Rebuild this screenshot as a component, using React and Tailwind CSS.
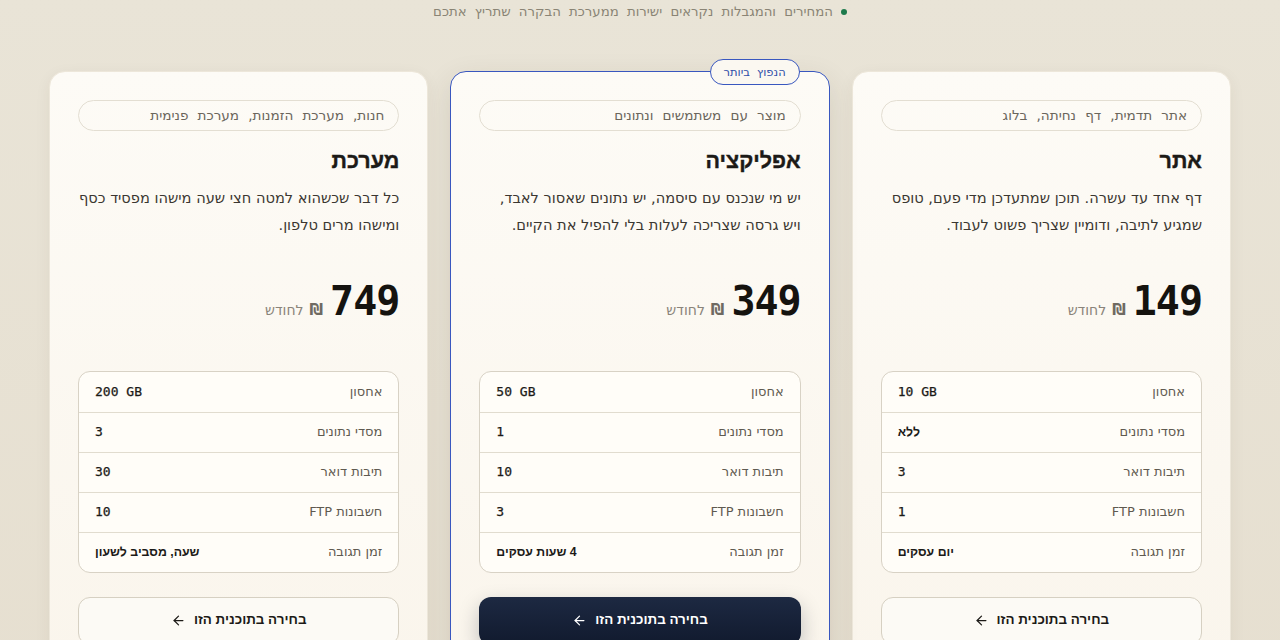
import { ArrowLeft } from 'lucide-react';

const mono = { fontFamily: '"DejaVu Sans Mono", "Liberation Mono", monospace' };
const heavy = { fontFamily: '"Liberation Sans", "DejaVu Sans", sans-serif' };

const plans = [
  {
    id: 'site',
    tags: 'אתר תדמית, דף נחיתה, בלוג',
    title: 'אתר',
    desc: 'דף אחד עד עשרה. תוכן שמתעדכן מדי פעם, טופס שמגיע לתיבה, ודומיין שצריך פשוט לעבוד.',
    price: '149',
    rows: [
      ['אחסון', '10 GB', true],
      ['מסדי נתונים', 'ללא', false],
      ['תיבות דואר', '3', true],
      ['חשבונות FTP', '1', true],
      ['זמן תגובה', 'יום עסקים', false],
    ],
  },
  {
    id: 'app',
    tags: 'מוצר עם משתמשים ונתונים',
    title: 'אפליקציה',
    desc: 'יש מי שנכנס עם סיסמה, יש נתונים שאסור לאבד, ויש גרסה שצריכה לעלות בלי להפיל את הקיים.',
    price: '349',
    featured: true,
    rows: [
      ['אחסון', '50 GB', true],
      ['מסדי נתונים', '1', true],
      ['תיבות דואר', '10', true],
      ['חשבונות FTP', '3', true],
      ['זמן תגובה', '4 שעות עסקים', false],
    ],
  },
  {
    id: 'system',
    tags: 'חנות, מערכת הזמנות, מערכת פנימית',
    title: 'מערכת',
    desc: 'כל דבר שכשהוא למטה חצי שעה מישהו מפסיד כסף ומישהו מרים טלפון.',
    price: '749',
    rows: [
      ['אחסון', '200 GB', true],
      ['מסדי נתונים', '3', true],
      ['תיבות דואר', '30', true],
      ['חשבונות FTP', '10', true],
      ['זמן תגובה', 'שעה, מסביב לשעון', false],
    ],
  },
];

function PlanCard({ plan }) {
  const { featured } = plan;
  return (
    <div
      className={
        'relative rounded-2xl bg-gradient-to-b from-[#fdfbf6] to-[#faf5ec] px-7 pt-7 pb-7 ' +
        (featured
          ? 'border border-[#3957bf] shadow-[0_10px_30px_rgba(60,50,30,0.12)]'
          : 'border border-[#ede7da] shadow-[0_4px_16px_rgba(60,50,30,0.06)]')
      }
    >
      {featured && (
        <span className="absolute -top-[13px] right-[29px] rounded-full border border-[#3957bf] bg-[#fbf8f1] px-[13px] py-[4px] text-[11.5px] leading-4 text-[#2f4ea8] [word-spacing:0.3em]">
          הנפוץ ביותר
        </span>
      )}

      <div className="flex h-[31px] items-center rounded-full border border-[#e3ded2] px-[14px] text-[13.6px] text-[#6b665c] [word-spacing:0.35em]">
        {plan.tags}
      </div>

      <h3
        className="mt-[14px] text-[21.5px] font-bold leading-8 text-[#1c1a17] [-webkit-text-stroke:0.4px_#1c1a17]"
        style={heavy}
      >
        {plan.title}
      </h3>
      <p className="mt-[7px] text-[14.6px] leading-[27px] text-[#3b3731]">{plan.desc}</p>

      <div className="mt-[44px] flex items-baseline">
        <span className="text-[40px] font-bold leading-[38px] tracking-tight text-[#15130f]" style={mono}>
          {plan.price}
        </span>
        <span className="mr-[7px] text-[15px] font-bold text-[#6f6a62]">₪</span>
        <span className="mr-[6px] text-[14px] text-[#8a847a]">לחודש</span>
      </div>

      <div className="mt-[49px] overflow-hidden rounded-xl border border-[#d8d2c5] bg-[#fffdf8]">
        {plan.rows.map(([label, value, isMono], i) => (
          <div
            key={label}
            className={
              'flex h-10 items-center justify-between px-4 ' +
              (i > 0 ? 'border-t border-[#e1dccf]' : '')
            }
          >
            <span className="text-[13px] text-[#5f5a50]">{label}</span>
            {isMono ? (
              <span dir="ltr" className="text-[13px] font-normal text-[#1c1a17] [-webkit-text-stroke:0.25px_#1c1a17]" style={mono}>
                {value}
              </span>
            ) : (
              <span className="text-[12.3px] font-bold text-[#1c1a17]" style={heavy}>
                {value}
              </span>
            )}
          </div>
        ))}
      </div>

      <button
        type="button"
        className={
          'mt-6 flex h-12 w-full items-center justify-center gap-2 rounded-xl text-[13.4px] font-bold ' +
          (featured
            ? 'bg-gradient-to-b from-[#1d2942] to-[#111a2e] text-white shadow-[0_8px_20px_rgba(17,26,46,0.25)]'
            : 'border border-[#d6d0c2] bg-[#fcfaf5] text-[#1c1a17]')
        }
        style={heavy}
      >
        <span>בחירה בתוכנית הזו</span>
        <ArrowLeft size={15} strokeWidth={2} />
      </button>
    </div>
  );
}

export default function App() {
  return (
    <div
      dir="rtl"
      className="min-h-screen overflow-hidden bg-gradient-to-b from-[#e9e4d7] to-[#e6dfd0]"
      style={{ fontFamily: '"DejaVu Sans", "Noto Sans", sans-serif' }}
    >
      <div className="flex items-center justify-center gap-2 pt-[3px] text-[13.3px] leading-[18px] text-[#8a8475] [word-spacing:0.3em]">
        <span className="h-[6px] w-[6px] rounded-full bg-[#1d7a4c]" />
        <span>המחירים והמגבלות נקראים ישירות ממערכת הבקרה שתריץ אתכם</span>
      </div>

      <div className="mx-auto mt-[50px] grid grid-cols-3 gap-[22px] px-[49px] pb-10">
        {plans.map((plan) => (
          <PlanCard key={plan.id} plan={plan} />
        ))}
      </div>
    </div>
  );
}
